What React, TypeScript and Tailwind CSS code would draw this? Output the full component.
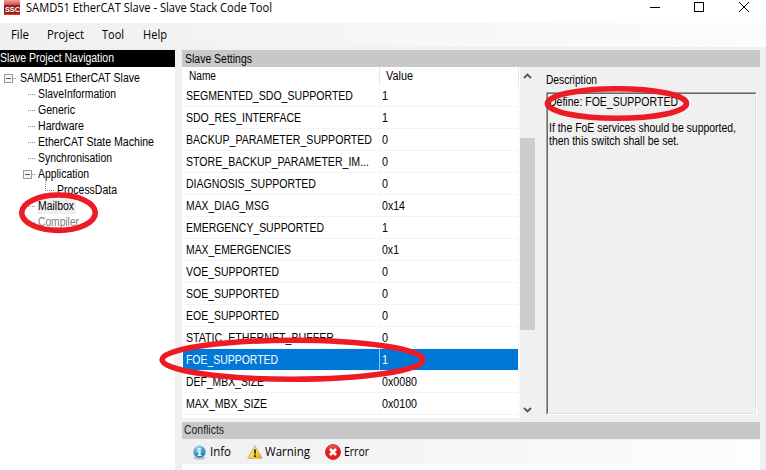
import React, { useLayoutEffect, useRef } from "react";

const SANS = "font-['Liberation_Sans',Arial,sans-serif] text-[12.5px]";
const UI = "font-['Open_Sans','Noto_Sans',sans-serif]";

// A single line of text condensed or widened to a set width.
function Fit({ w, className = "", children }: { w: number; className?: string; children: string }) {
  const ref = useRef<HTMLSpanElement>(null);
  useLayoutEffect(() => {
    const el = ref.current;
    if (!el) return;
    el.style.transform = "none";
    el.style.transform = `scaleX(${w / el.getBoundingClientRect().width})`;
  }, [w, children]);
  return (
    <span className={`block shrink-0 ${className}`} style={{ width: w }}>
      <span ref={ref} className="inline-block origin-left whitespace-pre align-top">{children}</span>
    </span>
  );
}

type Node = { label: string; w: number; depth: number; box?: boolean; state?: "selected" | "disabled" };
const tree: Node[] = [
  { label: "SAMD51 EtherCAT Slave", w: 120, depth: 0, box: true },
  { label: "SlaveInformation", w: 78, depth: 1 },
  { label: "Generic", w: 37, depth: 1 },
  { label: "Hardware", w: 46, depth: 1 },
  { label: "EtherCAT State Machine", w: 116, depth: 1 },
  { label: "Synchronisation", w: 74, depth: 1 },
  { label: "Application", w: 51, depth: 1, box: true },
  { label: "ProcessData", w: 60, depth: 2 },
  { label: "Mailbox", w: 36, depth: 1, state: "selected" },
  { label: "Compiler", w: 41, depth: 1, state: "disabled" },
];

const rows: [string, number, string, number][] = [
  ["SEGMENTED_SDO_SUPPORTED", 167, "1", 6],
  ["SDO_RES_INTERFACE", 115, "1", 6],
  ["BACKUP_PARAMETER_SUPPORTED", 186, "0", 6],
  ["STORE_BACKUP_PARAMETER_IM...", 183, "0", 6],
  ["DIAGNOSIS_SUPPORTED", 130, "0", 6],
  ["MAX_DIAG_MSG", 83, "0x14", 23],
  ["EMERGENCY_SUPPORTED", 138, "1", 6],
  ["MAX_EMERGENCIES", 105, "0x1", 17],
  ["VOE_SUPPORTED", 93, "0", 6],
  ["SOE_SUPPORTED", 93, "0", 6],
  ["EOE_SUPPORTED", 93, "0", 6],
  ["STATIC_ETHERNET_BUFFER", 148, "0", 6],
  ["FOE_SUPPORTED", 92, "1", 6],
  ["DEF_MBX_SIZE", 78, "0x0080", 35],
  ["MAX_MBX_SIZE", 81, "0x0100", 35],
];

function ExpandBox() {
  return (
    <svg width="9" height="9" viewBox="0 0 9 9" shapeRendering="crispEdges" className="shrink-0">
      <rect x=".5" y=".5" width="8" height="8" fill="#f7f7f7" stroke="#999" />
      <path d="M2 4.5h5" stroke="#4059a5" />
    </svg>
  );
}

function TreeRow({ n }: { n: Node }) {
  const pad = n.depth === 0 ? "pl-1" : n.depth === 2 ? "pl-[45px]" : n.box ? "pl-[23px]" : "pl-7";
  const tone = n.state === "disabled" ? "text-[#808080]" : "text-black";
  return (
    <div className={`flex h-4 items-center ${pad}`}>
      {n.box && <ExpandBox />}
      <svg
        width={n.box ? 4 : n.depth === 2 ? 10 : 8}
        height="16"
        shapeRendering="crispEdges"
        className={`shrink-0 ${n.box ? "mr-0.5" : "mr-px"}`}
      >
        {n.depth === 2 && <path d="M.5 0v8" stroke="#888" strokeDasharray="1 1" />}
        <path d="M0 8.5h10" stroke="#888" strokeDasharray="1 1" />
      </svg>
      <span className={`flex h-4 items-center ${n.state === "selected" ? "bg-[#f0f0f0] pr-0.5" : ""} ${n.depth === 1 && n.box ? "" : "pl-px"} ${tone}`}>
        <Fit w={n.w} className="leading-4">{n.label}</Fit>
      </span>
    </div>
  );
}

function InfoIcon() {
  return (
    <svg width="13" height="15" viewBox="0 0 13 15">
      <defs>
        <radialGradient id="info" cx=".4" cy=".25" r=".8">
          <stop offset="0" stopColor="#b8e2f5" /><stop offset=".5" stopColor="#3e9bd0" /><stop offset="1" stopColor="#176ba8" />
        </radialGradient>
      </defs>
      <ellipse cx="6.5" cy="13" rx="6" ry="1.8" fill="#c4c4c4" />
      <circle cx="6.5" cy="7" r="6" fill="url(#info)" stroke="#8fbdd6" strokeWidth=".8" />
      <path d="M5.5 3h2v2h-2zM4.8 6h2.7v4h1v1H4.7v-1h1V7h-.9z" fill="#fff" />
    </svg>
  );
}

function WarningIcon() {
  return (
    <svg width="16" height="14" viewBox="0 0 16 14">
      <defs>
        <linearGradient id="warn" x1="0" y1="0" x2="1" y2="1">
          <stop offset="0" stopColor="#fff6a8" /><stop offset=".5" stopColor="#f8df35" /><stop offset="1" stopColor="#d9a700" />
        </linearGradient>
      </defs>
      <path d="M8 .7 15.3 13.3H.7Z" fill="url(#warn)" stroke="#b9b09a" strokeWidth=".9" strokeLinejoin="round" />
      <path d="M7 4.5h2L8.6 9.5H7.4ZM7.1 10.3h1.8V12H7.1z" fill="#222" />
    </svg>
  );
}

function ErrorIcon() {
  return (
    <svg width="16" height="16" viewBox="0 0 16 16">
      <defs>
        <linearGradient id="err" x1="0" y1="0" x2="0" y2="1">
          <stop offset="0" stopColor="#f06058" /><stop offset=".45" stopColor="#dc1717" /><stop offset="1" stopColor="#ff1a1a" />
        </linearGradient>
      </defs>
      <circle cx="8" cy="8" r="7.5" fill="url(#err)" stroke="#c0201c" strokeWidth=".8" />
      <path d="m5 5 6 6m0-6-6 6" stroke="#fff" strokeWidth="2.8" />
    </svg>
  );
}

function Logo() {
  return (
    <span className="flex h-[15px] w-4 items-center justify-center bg-gradient-to-b from-[#f4a09c] via-[#b41a14] via-50% to-[#ee3a36] pt-1">
      <span className="flex h-[9px] w-4 items-center justify-center bg-[#701411]/60 font-['Liberation_Sans',sans-serif] text-[7px] font-bold leading-none text-white">
        <Fit w={15} className="leading-[9px]">SSC</Fit>
      </span>
    </span>
  );
}

function Chevron({ down = false }: { down?: boolean }) {
  return (
    <svg width="15" height="17" viewBox="0 0 15 17">
      <path d={down ? "M4 7 7.5 10.5 11 7" : "M4 11 7.5 7.5 11 11"} fill="none" stroke="#555" strokeWidth="1.9" />
    </svg>
  );
}

export default function App() {
  return (
    <div className={`relative flex h-[470px] w-[766px] flex-col overflow-hidden bg-[#f0f0f0] text-black ${SANS}`}>
      <header className={`flex h-[23px] shrink-0 items-start bg-white pl-1 ${UI}`}>
        <Logo />
        <Fit w={246} className="ml-1.5 text-[12.5px] leading-4">SAMD51 EtherCAT Slave - Slave Stack Code Tool</Fit>
        <svg width="100" height="14" className="ml-auto mr-[16px] shrink-0" shapeRendering="crispEdges">
          <path d="M0 7.5h10" stroke="#000" />
          <rect x="44.5" y="2.5" width="9" height="9" fill="none" stroke="#000" />
          <path d="m89 2 10 10m0-10L89 12" stroke="#000" shapeRendering="auto" />
        </svg>
      </header>

      <nav className={`flex h-6 shrink-0 items-center bg-gradient-to-r from-[#f0f0f0] to-[#fcfcfc] pl-[11px] text-[12.5px] ${UI}`}>
        <Fit w={18}>File</Fit>
        <Fit w={37} className="ml-[18px]">Project</Fit>
        <Fit w={22} className="ml-[18px]">Tool</Fit>
        <Fit w={24} className="ml-[19px]">Help</Fit>
      </nav>

      <main className="flex min-h-0 flex-1 pt-[3px]">
        <aside className="flex w-[175px] shrink-0 flex-col bg-white">
          <div className="flex h-[17px] items-center bg-black text-white">
            <Fit w={114} className="leading-[19px]">Slave Project Navigation</Fit>
          </div>
          <div className="flex flex-col pt-[3px]">
            {tree.map((n) => <TreeRow key={n.label} n={n} />)}
          </div>
        </aside>

        <section className="ml-[7px] flex w-[578px] shrink-0 flex-col">
          <div className="flex h-[17px] shrink-0 items-center bg-[#c8c8c8] pl-[3px] pt-px">
            <Fit w={67} className="leading-[17px]">Slave Settings</Fit>
          </div>
          <div className="flex h-[351px] shrink-0">
            <div className="flex w-[338px] flex-col overflow-hidden bg-white pr-px">
              <div className="flex h-[18px] shrink-0 items-center border-r border-[#e5e5e5]">
                <div className="flex h-[18px] w-[198px] items-center border-r border-[#e5e5e5] pl-[7px]">
                  <Fit w={27} className="leading-[18px]">Name</Fit>
                </div>
                <Fit w={27} className="ml-[6px] leading-[18px]">Value</Fit>
              </div>
              {rows.map(([name, w, value, vw]) => {
                const on = name === "FOE_SUPPORTED";
                return (
                  <div key={name} className="flex h-[22px] shrink-0 border-b border-r border-[#f0f4fb] pl-px">
                    <div className={`flex flex-1 items-center ${on ? "bg-[#0078d7] text-white" : ""}`}>
                      <div className="flex h-full w-[197px] items-center border-r border-[#f0f4fb]/60 pl-[3px] pt-0.5">
                        <Fit w={w}>{name}</Fit>
                      </div>
                      <Fit w={vw} className="ml-0.5 pt-0.5">{value}</Fit>
                    </div>
                  </div>
                );
              })}
            </div>
            <div className="flex w-[15px] flex-col">
              <Chevron />
              <div className="mt-[54px] h-48 bg-[#cdcdcd]" />
              <div className="mt-auto h-[17px]"><Chevron down /></div>
            </div>
            <div className="ml-[11px] flex w-[211px] flex-col">
              <Fit w={51} className="mt-[5px] leading-4">Description</Fit>
              <div className="mt-1 h-[323px] border border-b-white border-l-[#a0a0a0] border-r-white border-t-[#a0a0a0]">
                <div className="h-full border border-b-[#e3e3e3] border-l-[#696969] border-r-[#e3e3e3] border-t-[#696969] pl-px pt-0.5 leading-[13px]">
                  <Fit w={129}>Define: FOE_SUPPORTED</Fit>
                  <Fit w={187} className="mt-[13px]">If the FoE services should be supported,</Fit>
                  <Fit w={130}>then this switch shall be set.</Fit>
                </div>
              </div>
            </div>
          </div>
          <div className="mt-1 flex h-[17px] shrink-0 items-center bg-[#c8c8c8] pl-0.5 text-[#222]">
            <Fit w={40} className="leading-[19px]">Conflicts</Fit>
          </div>
          <div className={`mt-px flex h-6 shrink-0 items-center bg-gradient-to-r from-[#f0f0f0] to-[#fdfdfd] pl-[11px] text-[12.5px] ${UI}`}>
            <InfoIcon />
            <Fit w={21} className="ml-1">Info</Fit>
            <span className="ml-4"><WarningIcon /></span>
            <Fit w={45} className="ml-0.5">Warning</Fit>
            <span className="ml-[15px]"><ErrorIcon /></span>
            <Fit w={25} className="ml-[3px]">Error</Fit>
          </div>
          <div className="flex-1 bg-white" />
        </section>
      </main>

      {/* Hand-drawn highlight rings */}
      <svg className="pointer-events-none absolute inset-0" width="766" height="470" fill="none" stroke="#ed1c24" strokeWidth="5.6">
        <ellipse cx="58.5" cy="212.7" rx="36.8" ry="17.7" />
        <ellipse cx="617" cy="103.5" rx="69.5" ry="14.7" />
        <ellipse cx="292.5" cy="359.8" rx="130.4" ry="19.5" />
      </svg>
    </div>
  );
}
